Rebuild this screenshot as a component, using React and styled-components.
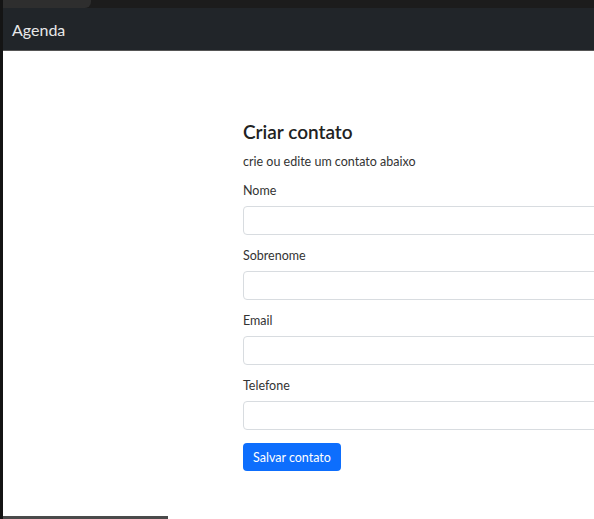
import React from "react";
import styled, { createGlobalStyle } from "styled-components";

const GlobalStyle = createGlobalStyle`
  html, body {
    margin: 0;
    padding: 0;
    background: #fff;
    font-family: Lato, "Noto Sans", sans-serif;
    overflow: hidden;
  }
`;

function App() {
  const fields = ["Nome", "Sobrenome", "Email", "Telefone"];

  return (
    <Page>
      <GlobalStyle />
      <TabStrip>
        <Tab />
      </TabStrip>
      <Navbar>
        <Brand>Agenda</Brand>
      </Navbar>
      <Main>
        <Form onSubmit={e => e.preventDefault()}>
          <Title>Criar contato</Title>
          <Subtitle>crie ou edite um contato abaixo</Subtitle>
          {fields.map(f => (
            <Field key={f}>
              <Label>{f}</Label>
              <Input type="text" />
            </Field>
          ))}
          <SaveButton type="submit">Salvar contato</SaveButton>
        </Form>
      </Main>
      <ScrollThumb />
    </Page>
  );
}

const Page = styled.div`
  position: relative;
  display: flex;
  flex-direction: column;
  height: 519px;
  border-left: 3px solid #141414;
  overflow: hidden;
`;

const TabStrip = styled.div`
  height: 8px;
  background: #1c1c1c;
  display: flex;
`;

const Tab = styled.div`
  width: 88px;
  background: #2e2e2e;
  border-radius: 0 0 6px 0;
`;

const Navbar = styled.nav`
  height: 42px;
  display: flex;
  align-items: center;
  padding: 0 9px;
  background: #212529;
  border-bottom: 1px solid #555;
`;

const Brand = styled.span`
  color: #e8e8e8;
  font-size: 16px;
`;

const Main = styled.main`
  flex: 1;
  padding: 70px 0 0 240px;
`;

const Form = styled.form`
  width: 420px;
  display: flex;
  flex-direction: column;
`;

const Title = styled.h1`
  margin: 0;
  font-size: 19px;
  font-weight: 600;
  color: #222;
  line-height: 22px;
`;

const Subtitle = styled.p`
  margin: 11px 0 13px;
  font-size: 12.5px;
  color: #333;
  line-height: 16px;
`;

const Field = styled.div`
  display: flex;
  flex-direction: column;
  margin-bottom: 13px;
`;

const Label = styled.label`
  font-size: 12.5px;
  color: #333;
  line-height: 16px;
  margin-bottom: 7px;
`;

const Input = styled.input`
  height: 29px;
  box-sizing: border-box;
  border: 1px solid #d8dce0;
  border-radius: 4px;
  background: #fff;
`;

const SaveButton = styled.button`
  align-self: flex-start;
  height: 28px;
  width: 98px;
  border: none;
  border-radius: 4px;
  background: #0d6efd;
  color: #fff;
  font-family: inherit;
  font-size: 12.5px;
  padding: 0;
`;

const ScrollThumb = styled.div`
  position: absolute;
  left: -3px;
  bottom: 0;
  width: 168px;
  height: 3px;
  background: #4a4a4a;
`;

export default App;
